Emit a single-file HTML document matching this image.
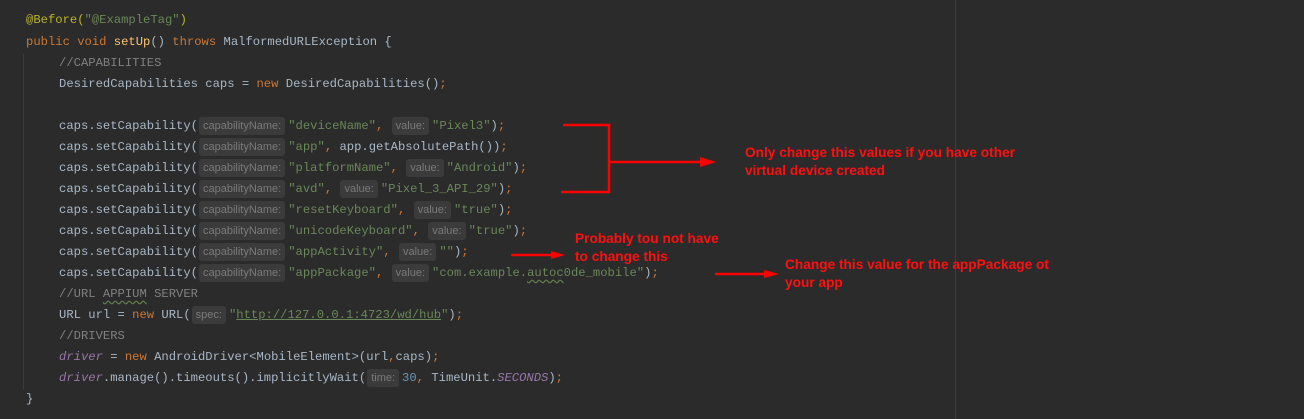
<!DOCTYPE html>
<html><head><style>
body{margin:0;width:1304px;height:419px;background:#2b2b2b;overflow:hidden;position:relative;font-family:"Liberation Mono",monospace;font-size:12.2px;color:#a9b7c6}
.l{position:absolute;left:26px;height:21px;line-height:21px;white-space:pre}
.i{left:59px}
.k{color:#cc7832}.s{color:#6a8759}.c{color:#808080}.a{color:#bbb529}.m{color:#ffc66d}.f{color:#9876aa;font-style:italic}.n{color:#6897bb}
.h{display:inline-block;background:#3b3b3b;color:#7a7a7a;font-family:"Liberation Sans",sans-serif;font-size:11px;line-height:18px;height:18px;border-radius:3px;padding:0 4px;margin:1px 3px 0 1px;vertical-align:top}
.w{text-decoration:underline wavy #5f7f4f;text-underline-offset:3px}
.r{position:absolute;color:#ff1010;font-family:"Liberation Sans",sans-serif;font-weight:bold;font-size:13.7px;line-height:18px;white-space:pre}
</style></head><body>
<div style="position:absolute;left:955px;top:0;width:1px;height:419px;background:#3c3c3c"></div>
<div style="position:absolute;left:23px;top:54px;width:1px;height:336px;background:#3a3a3a"></div>
<div class="l" style="top:10px"><span class="a">@Before(</span><span class="s">"@ExampleTag"</span><span class="a">)</span></div>
<div class="l" style="top:32px"><span class="k">public void </span><span class="m">setUp</span>() <span class="k">throws </span>MalformedURLException {</div>
<div class="l i" style="top:53px"><span class="c">//CAPABILITIES</span></div>
<div class="l i" style="top:74px">DesiredCapabilities caps = <span class="k">new </span>DesiredCapabilities()<span class="k">;</span></div>
<div class="l i" style="top:116px">caps.setCapability(<span class="h">capabilityName:</span><span class="s">"deviceName"</span><span class="k">, </span><span class="h">value:</span><span class="s">"Pixel3"</span>)<span class="k">;</span></div>
<div class="l i" style="top:137px">caps.setCapability(<span class="h">capabilityName:</span><span class="s">"app"</span><span class="k">, </span>app.getAbsolutePath())<span class="k">;</span></div>
<div class="l i" style="top:158px">caps.setCapability(<span class="h">capabilityName:</span><span class="s">"platformName"</span><span class="k">, </span><span class="h">value:</span><span class="s">"Android"</span>)<span class="k">;</span></div>
<div class="l i" style="top:179px">caps.setCapability(<span class="h">capabilityName:</span><span class="s">"avd"</span><span class="k">, </span><span class="h">value:</span><span class="s">"Pixel_3_API_29"</span>)<span class="k">;</span></div>
<div class="l i" style="top:200px">caps.setCapability(<span class="h">capabilityName:</span><span class="s">"resetKeyboard"</span><span class="k">, </span><span class="h">value:</span><span class="s">"true"</span>)<span class="k">;</span></div>
<div class="l i" style="top:221px">caps.setCapability(<span class="h">capabilityName:</span><span class="s">"unicodeKeyboard"</span><span class="k">, </span><span class="h">value:</span><span class="s">"true"</span>)<span class="k">;</span></div>
<div class="l i" style="top:242px">caps.setCapability(<span class="h">capabilityName:</span><span class="s">"appActivity"</span><span class="k">, </span><span class="h">value:</span><span class="s">""</span>)<span class="k">;</span></div>
<div class="l i" style="top:263px">caps.setCapability(<span class="h">capabilityName:</span><span class="s">"appPackage"</span><span class="k">, </span><span class="h">value:</span><span class="s">"com.example.<span class="w">autoc</span>0de_mobile"</span>)<span class="k">;</span></div>
<div class="l i" style="top:284px"><span class="c">//URL <span class="w">APPIUM</span> SERVER</span></div>
<div class="l i" style="top:305px">URL url = <span class="k">new </span>URL(<span class="h">spec:</span><span class="s">"<u>http://127.0.0.1:4723/wd/hub</u>"</span>)<span class="k">;</span></div>
<div class="l i" style="top:326px"><span class="c">//DRIVERS</span></div>
<div class="l i" style="top:347px"><span class="f">driver</span> = <span class="k">new </span>AndroidDriver&lt;MobileElement&gt;(url<span class="k">,</span>caps)<span class="k">;</span></div>
<div class="l i" style="top:368px"><span class="f">driver</span>.manage().timeouts().implicitlyWait(<span class="h">time:</span><span class="n">30</span><span class="k">, </span>TimeUnit.<span class="f">SECONDS</span>)<span class="k">;</span></div>
<div class="l" style="top:389px">}</div>
<svg style="position:absolute;left:0;top:0" width="1304" height="419">
<g stroke="#ff0000" stroke-width="2.5" fill="none">
<polyline points="563,125 609,125 609,192 561,192"/>
<line x1="609" y1="162" x2="703" y2="162"/>
<line x1="511" y1="255" x2="553" y2="255"/>
<line x1="715" y1="274" x2="766" y2="274"/>
</g>
<g fill="#ff0000">
<polygon points="700,157 716,162 700,167"/>
<polygon points="551,251 565,255 551,259"/>
<polygon points="764,270 779,274 764,278"/>
</g>
</svg>
<div class="r" style="left:745px;top:144px">Only change this values if you have other
virtual device created</div>
<div class="r" style="left:575px;top:230px">Probably tou not have
to change this</div>
<div class="r" style="left:785px;top:256px">Change this value for the appPackage ot
your app</div>
</body></html>
